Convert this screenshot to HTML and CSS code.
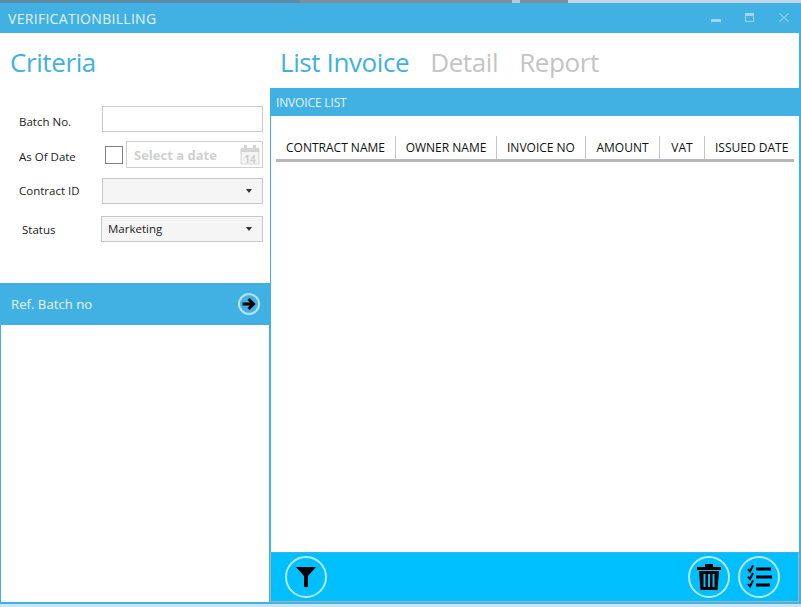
FILE: index.html
```html
<!DOCTYPE html>
<html lang="en">
<head>
    <meta charset="UTF-8">
    <meta name="viewport" content="width=device-width, initial-scale=1.0">
    <title>VerificationBilling</title>
    <link rel="stylesheet" href="styles.css">
</head>
<body>
    <div class="desktop-strip"></div>
    <div class="window">
        <header class="titlebar">
            <span class="title">VERIFICATIONBILLING</span>
            <div class="window-buttons">
                <svg width="10" height="10" viewBox="0 0 10 10"><rect x="0" y="6" width="10" height="3" fill="#9fd6f0"/></svg>
                <svg width="10" height="10" viewBox="0 0 10 10"><path d="M.5.5h8v8h-8z" fill="none" stroke="#9fd6f0"/><rect x="0" y="0" width="9" height="3" fill="#9fd6f0"/></svg>
                <svg width="10" height="10" viewBox="0 0 10 10"><path d="M.5.5l9 8M9.500.5l-9 8" stroke="#86cbec" stroke-width="1.300"/></svg>
            </div>
        </header>

        <div class="content">
            <aside class="sidebar">
                <h1 class="heading criteria">Criteria</h1>
                <div class="form">
                    <div class="form-row batch-row">
                        <label class="field-label">Batch No.</label>
                        <input class="text-input" type="text">
                    </div>
                    <div class="form-row date-row">
                        <label class="field-label">As Of Date</label>
                        <span class="checkbox"></span>
                        <div class="date-picker">
                            <span>Select a date</span>
                            <svg width="20" height="20" viewBox="0 0 20 20">
                                <path d="M1 4h18v15H1z" fill="#f4f4f4" stroke="#d4d4d4"/>
                                <rect x="1" y="3" width="18" height="4" fill="#d4d4d4"/>
                                <rect x="4" y="0" width="3" height="5" fill="#d4d4d4"/>
                                <rect x="13" y="0" width="3" height="5" fill="#d4d4d4"/>
                                <text x="10" y="17.500" class="cal-day">14</text>
                            </svg>
                        </div>
                    </div>
                    <div class="form-row contract-row">
                        <label class="field-label">Contract ID</label>
                        <div class="select"><span></span><i class="caret"></i></div>
                    </div>
                    <div class="form-row status-row">
                        <label class="field-label">Status</label>
                        <div class="select"><span>Marketing</span><i class="caret"></i></div>
                    </div>
                </div>

                <div class="ref-bar">
                    <span>Ref. Batch no</span>
                    <span class="round-small">
                        <svg width="14" height="14" viewBox="0 0 14 14"><path d="M.5 7h10.500M6.500 2L11.500 7 6.500 12" fill="none" stroke="#000" stroke-width="3"/></svg>
                    </span>
                </div>
                <div class="ref-list"></div>
            </aside>

            <main class="main">
                <nav class="tabs">
                    <span class="heading active">List Invoice</span>
                    <span class="heading">Detail</span>
                    <span class="heading">Report</span>
                </nav>
                <section class="panel">
                    <div class="panel-title">INVOICE LIST</div>
                    <div class="panel-body">
                        <div class="grid-header">
                            <div class="col col-contract">CONTRACT NAME</div>
                            <div class="col col-owner">OWNER NAME</div>
                            <div class="col col-invoice">INVOICE NO</div>
                            <div class="col col-amount">AMOUNT</div>
                            <div class="col col-vat">VAT</div>
                            <div class="col col-date">ISSUED DATE</div>
                        </div>
                    </div>
                    <div class="toolbar">
                        <button class="round-btn">
                            <svg width="24" height="24" viewBox="0 0 24 24"><path d="M2 2h20l-8 9v11h-4V11z" fill="#000"/></svg>
                        </button>
                        <div class="toolbar-right">
                            <button class="round-btn">
                                <svg width="26" height="26" viewBox="0 0 26 26">
                                    <rect x="1" y="3" width="24" height="3" fill="#000"/>
                                    <rect x="9" y="0" width="8" height="3" fill="#000"/>
                                    <path d="M3 7h20l-1.500 19h-17z" fill="#000"/>
                                    <path d="M8.500 10v13M13 10v13M17.500 10v13" stroke="#00bfff" stroke-width="2"/>
                                </svg>
                            </button>
                            <button class="round-btn">
                                <svg width="26" height="26" viewBox="0 0 26 26">
                                    <path d="M2 5l2 2.500L7 1.500M2 12.500l2 2.500L7 9M2 20l2 2.500L7 16.500" fill="none" stroke="#000" stroke-width="2"/>
                                    <path d="M10 5h15M10 13h16M10 21h14" stroke="#000" stroke-width="3.200"/>
                                </svg>
                            </button>
                        </div>
                    </div>
                </section>
            </main>
        </div>
    </div>
</body>
</html>
```

FILE: styles.css
```css
* { box-sizing: border-box; }

html, body {
    margin: 0;
    height: 607px;
    overflow: hidden;
}

body {
    background: #c8e6f5;
    font-family: "Open Sans", "Noto Sans", sans-serif;
}

.desktop-strip {
    height: 3px;
    background: linear-gradient(to right, #5f8aa5 300px, #7b8f9b 300px, #7b8f9b 512px, #b8c8d4 512px, #b8c8d4 520px, #7b8f9b 520px, #7b8f9b 568px, #c3d6e6 568px);
}

.window {
    width: 801px;
    height: 601px;
    display: flex;
    flex-direction: column;
    background: #fff;
    border-right: 2px solid #41b0e2;
    border-bottom: 2px solid #41b0e2;
}

.titlebar {
    height: 30px;
    flex: none;
    display: flex;
    align-items: center;
    justify-content: space-between;
    padding: 0 10px 0 8px;
    background: #41b0e2;
}

.title {
    font-size: 14px;
    color: #e4f4fc;
    letter-spacing: 0.3px;
}

.window-buttons {
    display: flex;
    gap: 24px;
}

.content {
    flex: 1;
    display: flex;
    min-height: 0;
}

.heading {
    font-family: "Open Sans", sans-serif;
    font-size: 26px;
    font-weight: 400;
    color: #c4c4c4;
    line-height: 36px;
    letter-spacing: -0.4px;
}

.heading.active, .criteria { color: #41b0e2; }

.sidebar {
    width: 270px;
    flex: none;
    display: flex;
    flex-direction: column;
}

.criteria {
    margin: 11px 0 0 10px;
}

.form {
    margin-top: 26px;
    font-size: 11.500px;
    color: #222;
}

.form-row {
    display: flex;
    align-items: center;
}

.field-label {
    width: 102px;
    padding-left: 19px;
    flex: none;
}

.batch-row .field-label, .date-row .field-label { padding-top: 4px; }
.contract-row .field-label { padding-bottom: 1px; }

.text-input {
    width: 161px;
    height: 26px;
    border: 1px solid #c8c8c8;
    background: #fff;
}

.date-row { margin-top: 9px; height: 27px; }
.date-row .field-label { width: 105px; }

.checkbox {
    width: 18px;
    height: 18px;
    flex: none;
    border: 1px solid #808080;
    background: #fff;
}

.date-picker {
    width: 137px;
    height: 27px;
    margin-left: 3px;
    display: flex;
    align-items: center;
    justify-content: space-between;
    padding: 1px 2px 0 7px;
    border: 1px solid #d0d0d0;
    font-size: 13px;
    font-weight: 700;
    color: #cfcfcf;
}

.cal-day {
    font-size: 10px;
    font-weight: 700;
    fill: #cfcfcf;
    text-anchor: middle;
}

.select {
    width: 161px;
    height: 26px;
    display: flex;
    align-items: center;
    justify-content: space-between;
    padding: 0 10px 1px 6px;
    border: 1px solid #c8c8c8;
    background: #f5f5f5;
    color: #222;
}

.caret {
    width: 0;
    height: 0;
    border-left: 3px solid transparent;
    border-right: 3px solid transparent;
    border-top: 4px solid #333;
}

.contract-row { margin-top: 10px; }
.status-row { margin-top: 12px; }
.status-row .field-label { width: 101px; padding-left: 22px; }
.status-row .select { width: 162px; }

.ref-bar {
    height: 42px;
    margin-top: 41px;
    flex: none;
    display: flex;
    align-items: center;
    justify-content: space-between;
    padding: 0 10px 0 11px;
    background: #41b0e2;
    color: #e8f6fd;
    font-size: 13.200px;
}

.round-small {
    width: 22px;
    height: 22px;
    display: flex;
    align-items: center;
    justify-content: center;
    border: 2px solid #b5e3f7;
    border-radius: 50%;
}

.ref-list {
    flex: 1;
    border-left: 1px solid #41b0e2;
    border-right: 1px solid #41b0e2;
    background: #fff;
}

.main {
    flex: 1;
    display: flex;
    flex-direction: column;
    min-width: 0;
}

.tabs {
    height: 55px;
    flex: none;
    display: flex;
    gap: 21px;
    padding: 11px 0 0 10px;
}

.panel {
    flex: 1;
    display: flex;
    flex-direction: column;
    min-height: 0;
}

.panel-title {
    height: 28px;
    flex: none;
    display: flex;
    align-items: center;
    padding-left: 6px;
    background: #41b0e2;
    color: #e8f6fd;
    font-size: 12px;
    letter-spacing: -0.15px;
}

.panel-body {
    flex: 1;
    padding: 20px 5px 0;
    border-left: 1px solid #41b0e2;
}

.grid-header {
    display: flex;
    height: 26px;
    border-bottom: 3px solid #b8b8b8;
    font-size: 12px;
    color: #111;
}

.col {
    display: flex;
    align-items: center;
    justify-content: center;
    border-right: 1px solid #c4c4c4;
    padding-bottom: 1px;
}

.col-contract { width: 120px; }
.col-owner { width: 101px; }
.col-invoice { width: 89px; }
.col-amount { width: 74px; }
.col-vat { width: 45px; }
.col-date { width: 89px; border-right: 0; justify-content: flex-start; padding-left: 10px; }

.toolbar {
    height: 50px;
    flex: none;
    display: flex;
    align-items: center;
    justify-content: space-between;
    padding: 0 18px 0 14px;
    background: #00bfff;
    border-top: 1px solid #41b0e2;
    border-left: 1px solid #b0b0b0;
    border-right: 1px solid #b0b0b0;
    border-bottom: 1px solid #b0b0b0;
}

.toolbar-right {
    display: flex;
    gap: 8px;
}

.round-btn {
    width: 42px;
    height: 42px;
    padding: 0;
    display: flex;
    align-items: center;
    justify-content: center;
    border: 2px solid #b5e8fb;
    border-radius: 50%;
    background: none;
}
```
